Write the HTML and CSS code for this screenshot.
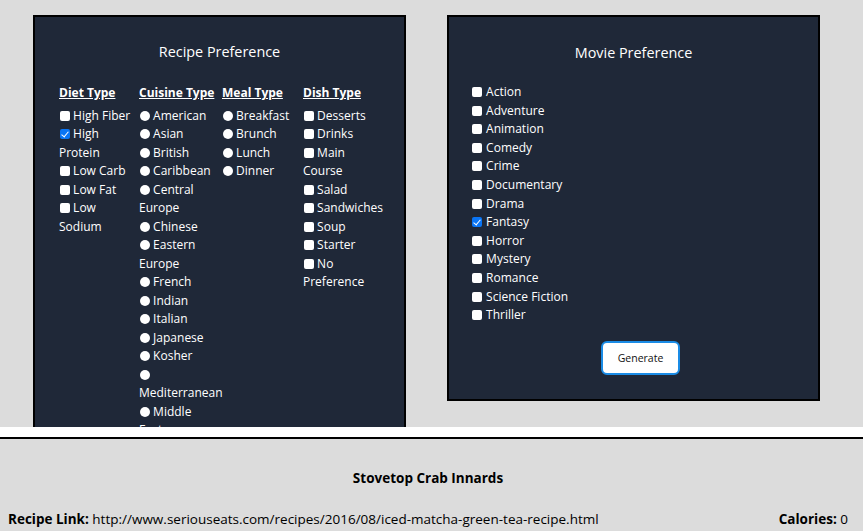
FILE: index.html
```html
<!DOCTYPE html>
<html>
<head>
<meta charset="utf-8">
<link rel="stylesheet" href="styles.css">
</head>
<body>
<div class="top">
  <section class="panel recipe">
    <h2 class="panel-title">Recipe Preference</h2>
    <div class="cols">
      <div class="col col-diet">
        <h3 class="col-title">Diet Type</h3>
        <div class="opt"><input type="checkbox"> High Fiber</div>
        <div class="opt"><input type="checkbox" checked> High Protein</div>
        <div class="opt"><input type="checkbox"> Low Carb</div>
        <div class="opt"><input type="checkbox"> Low Fat</div>
        <div class="opt"><input type="checkbox"> Low Sodium</div>
      </div>
      <div class="col col-cuisine">
        <h3 class="col-title">Cuisine Type</h3>
        <div class="opt"><input type="radio" name="c"> American</div>
        <div class="opt"><input type="radio" name="c"> Asian</div>
        <div class="opt"><input type="radio" name="c"> British</div>
        <div class="opt"><input type="radio" name="c"> Caribbean</div>
        <div class="opt"><input type="radio" name="c"> Central Europe</div>
        <div class="opt"><input type="radio" name="c"> Chinese</div>
        <div class="opt"><input type="radio" name="c"> Eastern Europe</div>
        <div class="opt"><input type="radio" name="c"> French</div>
        <div class="opt"><input type="radio" name="c"> Indian</div>
        <div class="opt"><input type="radio" name="c"> Italian</div>
        <div class="opt"><input type="radio" name="c"> Japanese</div>
        <div class="opt"><input type="radio" name="c"> Kosher</div>
        <div class="opt"><input type="radio" name="c"> Mediterranean</div>
        <div class="opt"><input type="radio" name="c"> Middle Eastern</div>
        <div class="opt"><input type="radio" name="c"> Nordic</div>
        <div class="opt"><input type="radio" name="c"> South American</div>
        <div class="opt"><input type="radio" name="c"> South East Asian</div>
      </div>
      <div class="col col-meal">
        <h3 class="col-title">Meal Type</h3>
        <div class="opt"><input type="radio" name="m"> Breakfast</div>
        <div class="opt"><input type="radio" name="m"> Brunch</div>
        <div class="opt"><input type="radio" name="m"> Lunch</div>
        <div class="opt"><input type="radio" name="m"> Dinner</div>
      </div>
      <div class="col col-dish">
        <h3 class="col-title">Dish Type</h3>
        <div class="opt"><input type="checkbox"> Desserts</div>
        <div class="opt"><input type="checkbox"> Drinks</div>
        <div class="opt"><input type="checkbox"> Main Course</div>
        <div class="opt"><input type="checkbox"> Salad</div>
        <div class="opt"><input type="checkbox"> Sandwiches</div>
        <div class="opt"><input type="checkbox"> Soup</div>
        <div class="opt"><input type="checkbox"> Starter</div>
        <div class="opt"><input type="checkbox"> No Preference</div>
      </div>
    </div>
  </section>
  <section class="panel movie">
    <h2 class="panel-title">Movie Preference</h2>
    <div class="genres">
      <div class="opt"><input type="checkbox"> Action</div>
      <div class="opt"><input type="checkbox"> Adventure</div>
      <div class="opt"><input type="checkbox"> Animation</div>
      <div class="opt"><input type="checkbox"> Comedy</div>
      <div class="opt"><input type="checkbox"> Crime</div>
      <div class="opt"><input type="checkbox"> Documentary</div>
      <div class="opt"><input type="checkbox"> Drama</div>
      <div class="opt"><input type="checkbox" checked> Fantasy</div>
      <div class="opt"><input type="checkbox"> Horror</div>
      <div class="opt"><input type="checkbox"> Mystery</div>
      <div class="opt"><input type="checkbox"> Romance</div>
      <div class="opt"><input type="checkbox"> Science Fiction</div>
      <div class="opt"><input type="checkbox"> Thriller</div>
    </div>
    <div class="actions"><button class="btn">Generate</button></div>
  </section>
</div>
<footer class="result">
  <h4 class="result-title">Stovetop Crab Innards</h4>
  <div class="result-row">
    <div><b>Recipe Link:</b> http://www.seriouseats.com/recipes/2016/08/iced-matcha-green-tea-recipe.html</div>
    <div><b>Calories:</b> 0</div>
  </div>
</footer>
</body>
</html>
```
FILE: styles.css
```css
html, body {
  margin: 0;
  padding: 0;
}
body {
  background: #ffffff;
  font-family: "Open Sans", "Noto Sans", sans-serif;
  font-size: 12px;
  color: #000;
  overflow: hidden;
}
.top {
  height: 427px;
  overflow: hidden;
  background: #dcdcdc;
  display: flex;
  align-items: flex-start;
  gap: 41px;
  padding: 15px 0 0 33px;
  box-sizing: border-box;
}
.panel {
  width: 373px;
  box-sizing: border-box;
  border: 2px solid #000;
  background: #1f2838;
  color: #fff;
  flex: none;
}
.panel-title {
  margin: 0;
  padding-top: 25px;
  font-size: 14.4px;
  font-weight: 400;
  text-align: center;
  line-height: 20px;
}
.movie .panel-title {
  padding-top: 26px;
}
.cols {
  display: grid;
  grid-template-columns: 80px 83px 81px 82px;
  padding: 22px 0 0 24px;
  line-height: 18.5px;
}
.col-title {
  margin: 0 0 4px;
  font-size: 12px;
  font-weight: 700;
  text-decoration: underline;
  line-height: 18.5px;
}
.opt input {
  appearance: none;
  -webkit-appearance: none;
  width: 10px;
  height: 10px;
  margin: 0 0 0 1px;
  background: #fff;
  border-radius: 2px;
  vertical-align: -1px;
  position: relative;
}
.opt input[type="radio"] {
  border-radius: 50%;
}
.opt input:checked {
  background: #0a75f5;
}
.opt input:checked::after {
  content: "";
  position: absolute;
  left: 3px;
  top: 0.5px;
  width: 3px;
  height: 6px;
  border: solid #fff;
  border-width: 0 1.6px 1.6px 0;
  transform: rotate(40deg);
}
.genres {
  padding: 20px 0 0 22px;
  line-height: 18.6px;
}
.genres .opt input {
  margin-right: 1px;
}
.actions {
  display: flex;
  justify-content: center;
  padding: 16px 0 24px 14px;
}
.btn {
  width: 79px;
  height: 34px;
  background: #fff;
  border: 2px solid #1a8ce6;
  border-radius: 6px;
  font-family: "Open Sans", "Noto Sans", sans-serif;
  font-size: 10.5px;
  color: #111;
  padding: 0;
}
.result {
  margin-top: 10px;
  border-top: 2px solid #000;
  background: #dcdcdc;
  height: 200px;
  padding: 0 15px 0 8px;
  font-size: 13.5px;
}
.result-title {
  margin: 0;
  padding-top: 30px;
  text-align: center;
  font-size: 13.5px;
  font-weight: 700;
  line-height: 18px;
}
.result-row {
  display: flex;
  justify-content: space-between;
  margin-top: 23px;
  line-height: 18px;
}
```
